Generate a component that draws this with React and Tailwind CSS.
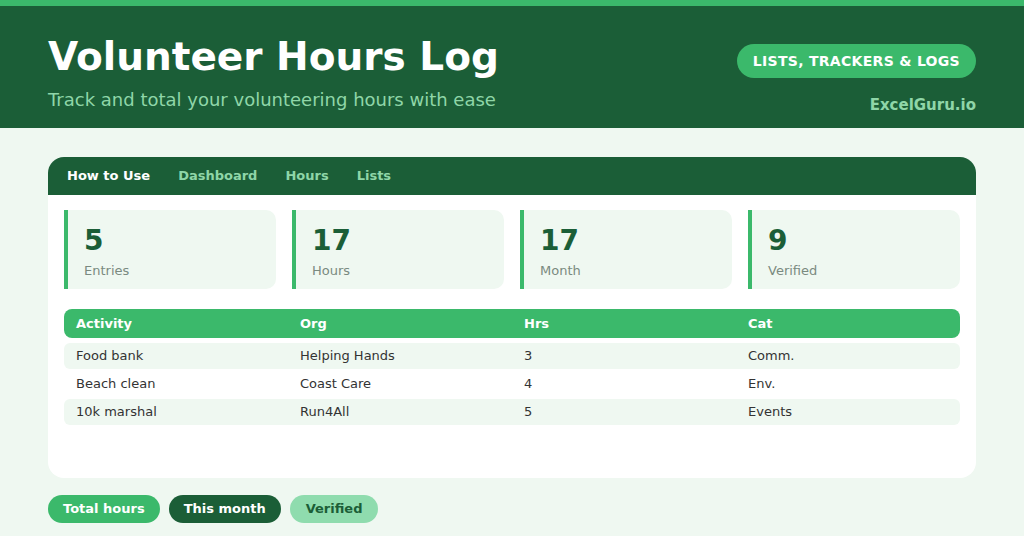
import React from 'react';

const stats = [
    { value: '5', label: 'Entries' },
    { value: '17', label: 'Hours' },
    { value: '17', label: 'Month' },
    { value: '9', label: 'Verified' },
];

const rows = [
    ['Food bank', 'Helping Hands', '3', 'Comm.'],
    ['Beach clean', 'Coast Care', '4', 'Env.'],
    ['10k marshal', 'Run4All', '5', 'Events'],
];

const App = () => {
    return (
        <div className="min-h-[536px] w-[1024px] bg-[#eff8f1] font-['DejaVu_Sans',sans-serif]">
            {/* Header */}
            <div className="border-t-[6px] border-[#3bb96b] bg-[#1b5e37] h-[128px] px-12 flex justify-between">
                <div className="pt-[26px]">
                    <h1 className="text-[39px] leading-[50px] font-bold text-white">Volunteer Hours Log</h1>
                    <p className="mt-[6px] text-[18px] leading-[24px] text-[#8fd6a8]">Track and total your volunteering hours with ease</p>
                </div>
                <div className="pt-[38px] flex flex-col items-end">
                    <span className="h-[34px] px-4 rounded-full bg-[#3bb96b] text-white text-[14px] font-bold tracking-[0.3px] flex items-center">
                        LISTS, TRACKERS &amp; LOGS
                    </span>
                    <span className="mt-[16px] text-[15px] font-bold text-[#8fd6a8]">ExcelGuru.io</span>
                </div>
            </div>

            {/* Main card */}
            <div className="mx-12 mt-[29px] bg-white rounded-2xl overflow-hidden h-[321px]">
                <div className="bg-[#1b5e37] h-[38px] flex items-center px-[19px] gap-[28px] text-[13px] font-bold">
                    <span className="text-white">How to Use</span>
                    <span className="text-[#8fd6a8]">Dashboard</span>
                    <span className="text-[#8fd6a8]">Hours</span>
                    <span className="text-[#8fd6a8]">Lists</span>
                </div>
                <div className="px-4 pt-[15px]">
                    <div className="grid grid-cols-4 gap-4">
                        {stats.map((s, i) => (
                            <div key={i} className="h-[79px] bg-[#eff8f1] border-l-4 border-[#3bb96b] rounded-r-[10px] pl-4 pt-[14px]">
                                <div className="text-[28px] leading-[34px] font-bold text-[#1b5e37]">{s.value}</div>
                                <div className="text-[13px] leading-[18px] mt-[4px] text-[#7a8a80]">{s.label}</div>
                            </div>
                        ))}
                    </div>

                    {/* Table */}
                    <div className="mt-[20px]">
                        <div className="grid grid-cols-4 h-[29px] items-center bg-[#3bb96b] rounded-lg text-[13px] font-bold text-white">
                            <span className="px-3">Activity</span>
                            <span className="px-3">Org</span>
                            <span className="px-3">Hrs</span>
                            <span className="px-3">Cat</span>
                        </div>
                        <div className="mt-[5px] flex flex-col gap-[2px]">
                            {rows.map((r, i) => (
                                <div key={i} className={`grid grid-cols-4 h-[26px] items-center rounded-md text-[13px] text-[#333333] ${i % 2 === 0 ? 'bg-[#eff8f1]' : 'bg-white'}`}>
                                    {r.map((c, j) => (
                                        <span key={j} className="px-3">{c}</span>
                                    ))}
                                </div>
                            ))}
                        </div>
                    </div>
                </div>
            </div>

            {/* Bottom pills */}
            <div className="mx-12 mt-[17px] flex gap-[9px] text-[13px] font-bold">
                <span className="h-[28px] px-[15px] rounded-full bg-[#3bb96b] text-white flex items-center">Total hours</span>
                <span className="h-[28px] px-[15px] rounded-full bg-[#1b5e37] text-white flex items-center">This month</span>
                <span className="h-[28px] px-4 rounded-full bg-[#8fdcae] text-[#1b5e37] flex items-center">Verified</span>
            </div>
        </div>
    );
};

export default App;
